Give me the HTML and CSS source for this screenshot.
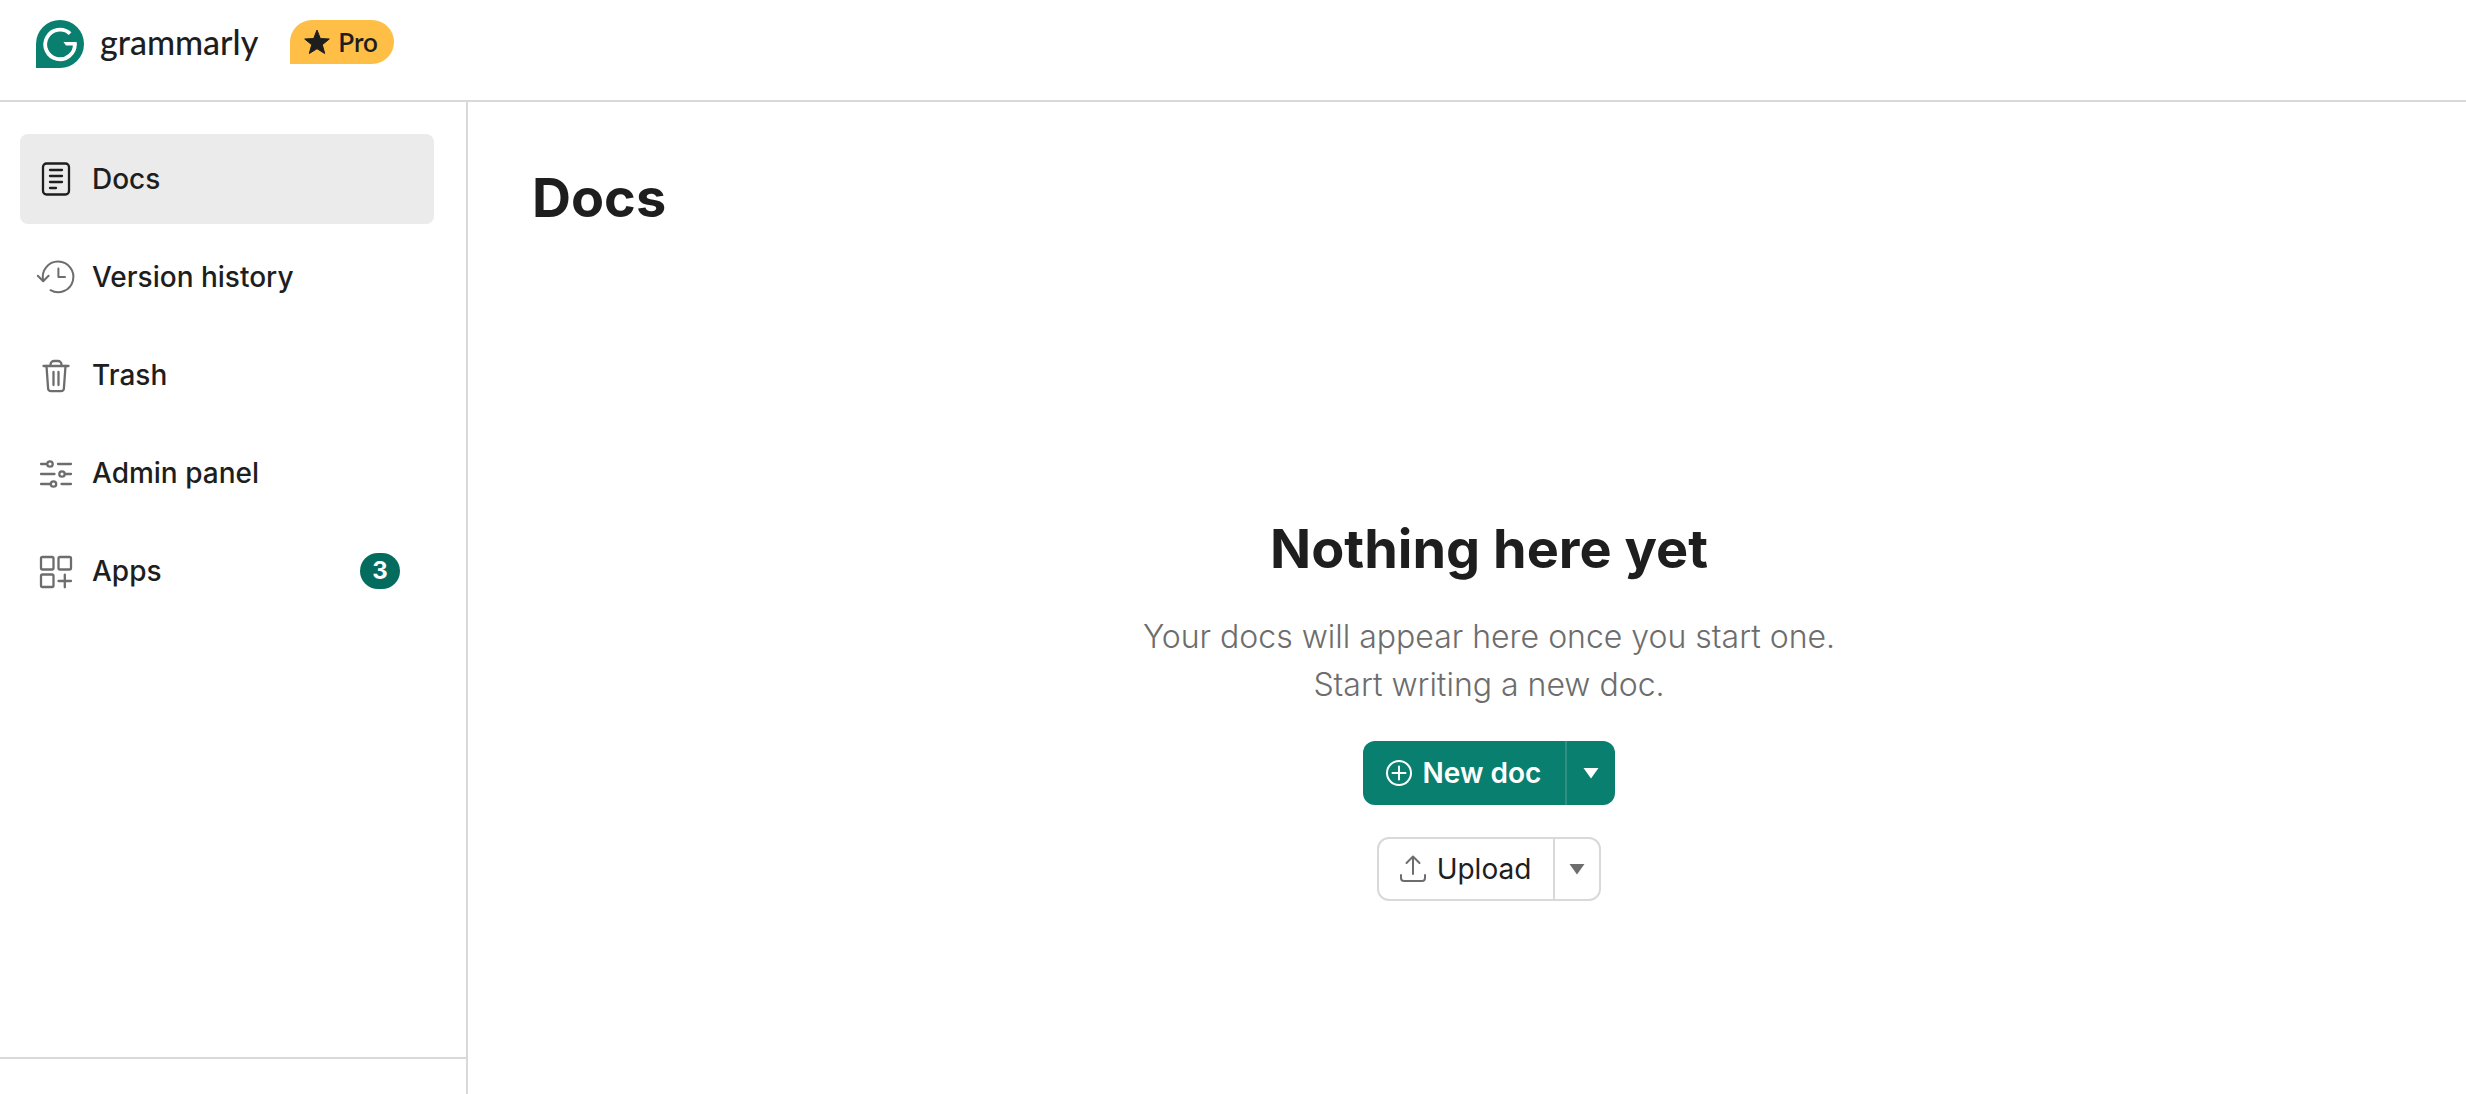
FILE: index.html
```html
<!DOCTYPE html>
<html lang="en">
<head>
    <meta charset="UTF-8">
    <meta name="viewport" content="width=device-width, initial-scale=1.0">
    <title>Docs - Grammarly</title>
    <link rel="stylesheet" href="styles.css">
</head>
<body>
    <header class="topbar">
        <a class="brand" href="#">
            <svg class="brand-mark" viewBox="0 0 48 48" aria-hidden="true">
                <path d="M24 0a24 24 0 0 1 0 48H0V24A24 24 0 0 1 24 0z" fill="#087f6f"/>
                <path d="M34.1 13.6A14.800 14.800 0 1 0 38.800 23.800" fill="none" stroke="#fff" stroke-width="3.8"/>
                <path d="M27.500 21.900h13.200v3.600H30z" fill="#fff"/>
            </svg>
            <span class="brand-name">grammarly</span>
        </a>
        <span class="plan">
            <svg class="plan-star" viewBox="0 0 26 26" aria-hidden="true">
                <path d="M13 1l3.300 8.500 9 .5-7 5.700 2.400 8.800-7.700-4.800-7.700 4.800 2.400-8.800-7-5.700 9-.5z" fill="#1e1e1e" stroke="#1e1e1e" stroke-linejoin="round"/>
            </svg>
            Pro
        </span>
    </header>
    <div class="layout">
        <aside class="sidebar">
            <nav class="menu">
                <a class="menu-item active" href="#">
                    <svg class="icon" viewBox="0 0 40 40" aria-hidden="true">
                        <rect x="7" y="4.5" width="26" height="31" rx="3.5"/>
                        <path d="M14 11h12M14 17h12M14 23h12M14 29h6"/>
                    </svg>
                    Docs
                </a>
                <a class="menu-item" href="#">
                    <svg class="icon thin" viewBox="0 0 40 40" aria-hidden="true">
                        <path d="M7.2 23.5A15.3 15.3 0 1 1 14.5 33.2"/>
                        <path d="M1.8 18.8l5.4 5.4 5.4-5.4M22.4 11.5V20H29"/>
                    </svg>
                    Version history
                </a>
                <a class="menu-item" href="#">
                    <svg class="icon" viewBox="0 0 40 40" aria-hidden="true">
                        <path d="M7.5 11h25M14.5 11V9.5A3.5 3.5 0 0 1 18 6h4a3.5 3.5 0 0 1 3.5 3.5V11"/>
                        <path d="M10.5 11l1.6 22.5a3 3 0 0 0 3 2.7h9.8a3 3 0 0 0 3-2.7L29.5 11M17.5 17v13M22.5 17v13"/>
                    </svg>
                    Trash
                </a>
                <a class="menu-item" href="#">
                    <svg class="icon" viewBox="0 0 40 40" aria-hidden="true">
                        <path d="M5 11h6M22 11h13M5 21h13.5M29 21h6M5 31h9.5M25.5 31H35"/>
                        <circle cx="14" cy="11" r="2.7"/>
                        <circle cx="26" cy="21" r="2.7"/>
                        <circle cx="17.5" cy="31" r="2.7"/>
                    </svg>
                    Admin panel
                </a>
                <a class="menu-item" href="#">
                    <svg class="icon" viewBox="0 0 40 40" aria-hidden="true">
                        <rect x="5" y="6" width="12.5" height="12.5" rx="1.5"/>
                        <rect x="22.5" y="6" width="12.5" height="12.5" rx="1.5"/>
                        <rect x="5" y="23.5" width="12.5" height="12.5" rx="1.5"/>
                        <path d="M22.5 30H35M28.8 23.7v12.6"/>
                    </svg>
                    Apps
                    <span class="count">3</span>
                </a>
            </nav>
            <div class="sidebar-footer"></div>
        </aside>
        <main class="content">
            <h1>Docs</h1>
            <section class="empty">
                <h2>Nothing here yet</h2>
                <p>Your docs will appear here once you start one.<br>Start writing a new doc.</p>
                <div class="split primary">
                    <button type="button" class="split-main">
                        <svg class="btn-icon" viewBox="0 0 28 28" aria-hidden="true">
                            <circle cx="14" cy="14" r="12"/>
                            <path d="M14 7.5v13M7.5 14h13"/>
                        </svg>
                        New doc
                    </button>
                    <button type="button" class="split-toggle" aria-label="More new doc options">
                        <svg class="caret" viewBox="0 0 16 12" aria-hidden="true"><path d="M.5 1h15L8 11.500z"/></svg>
                    </button>
                </div>
                <div class="split secondary">
                    <button type="button" class="split-main">
                        <svg class="btn-icon" viewBox="0 0 28 28" aria-hidden="true">
                            <path d="M2 20v3a3 3 0 0 0 3 3h18a3 3 0 0 0 3-3v-3M14 19V1.5M7.5 8L14 1.500 20.5 8"/>
                        </svg>
                        Upload
                    </button>
                    <button type="button" class="split-toggle" aria-label="More upload options">
                        <svg class="caret" viewBox="0 0 16 12" aria-hidden="true"><path d="M.5 1h15L8 11.500z"/></svg>
                    </button>
                </div>
            </section>
        </main>
    </div>
</body>
</html>
```

FILE: styles.css
```css
* { box-sizing: border-box; }
body {
    display: flex;
    flex-direction: column;
    min-height: 100vh;
    margin: 0;
    font-family: Inter, "Liberation Sans", sans-serif;
    font-size: 28px;
    line-height: 40px;
    color: #1e1e1e;
    background-color: #fff;
}
a {
    color: inherit;
    text-decoration: none;
}
svg {
    display: block;
    flex: none;
}

/* Top bar */
.topbar {
    display: flex;
    align-items: flex-start;
    gap: 32px;
    height: 102px;
    padding: 20px 36px;
    border-bottom: 2px solid #d9d9d9;
}
.brand {
    display: flex;
    align-items: flex-start;
    gap: 16px;
}
.brand-mark {
    width: 48px;
    height: 48px;
}
.brand-name {
    font-family: Lato, sans-serif;
    font-size: 34px;
    font-weight: 500;
    line-height: 44px;
}
.plan {
    display: flex;
    align-items: center;
    gap: 8px;
    height: 44px;
    padding: 0 16px 0 14px;
    border-radius: 22px 22px 22px 0;
    background-color: #ffbf47;
    font-family: Lato, sans-serif;
    font-size: 26px;
    font-weight: 600;
}
.plan-star {
    width: 26px;
    height: 26px;
}

/* Sidebar */
.layout {
    display: flex;
    flex: 1;
}
.sidebar {
    display: flex;
    flex-direction: column;
    width: 468px;
    border-right: 2px solid #d9d9d9;
}
.menu {
    display: flex;
    flex: 1;
    flex-direction: column;
    gap: 8px;
    padding: 32px 32px 32px 20px;
}
.menu-item {
    display: flex;
    align-items: center;
    gap: 16px;
    height: 90px;
    padding: 0 34px 0 16px;
    border-radius: 8px;
    font-weight: 500;
}
.menu-item.active {
    background-color: #ebebeb;
}
.icon {
    width: 40px;
    height: 40px;
    fill: none;
    stroke: #6d6d6d;
    stroke-width: 2.3;
    stroke-linecap: round;
    stroke-linejoin: round;
}
.active .icon {
    stroke: #1e1e1e;
}
.icon.thin {
    stroke-width: 2;
}
.count {
    width: 40px;
    height: 36px;
    margin-left: auto;
    border-radius: 18px;
    background-color: #046c5e;
    color: #fff;
    font-size: 24px;
    font-weight: 700;
    line-height: 36px;
    text-align: center;
}
.sidebar-footer {
    height: 37px;
    border-top: 2px solid #d9d9d9;
}

/* Main area */
.content {
    flex: 1;
    padding: 64px 20px 64px 64px;
}
h1, h2 {
    margin: 0;
    font-size: 54px;
    font-weight: 700;
    line-height: 64px;
}
.empty {
    display: flex;
    flex-direction: column;
    align-items: center;
    gap: 32px;
    padding-top: 287px;
}
.empty p {
    margin: 0;
    color: #6d6d6d;
    font-size: 32px;
    font-weight: 300;
    line-height: 48px;
    text-align: center;
}

/* Split buttons */
.split {
    display: flex;
    height: 64px;
    border-radius: 12px;
    overflow: hidden;
}
.split button {
    display: flex;
    align-items: center;
    border: none;
    background: none;
    color: inherit;
    font: inherit;
    cursor: pointer;
}
.split .split-main {
    gap: 10px;
    padding: 0 24px 0 22px;
}
.split .split-toggle {
    justify-content: center;
    width: 50px;
    padding: 0;
    border-left: 2px solid #d9d9d9;
}
.btn-icon {
    width: 28px;
    height: 28px;
    fill: none;
    stroke: currentColor;
    stroke-width: 2;
    stroke-linecap: round;
    stroke-linejoin: round;
}
.caret {
    width: 16px;
    height: 12px;
    fill: currentColor;
}
.primary {
    background-color: #087f6f;
    color: #fff;
    font-weight: 600;
}
.primary .split-toggle {
    border-left-color: #308f82;
}
.secondary {
    border: 2px solid #d9d9d9;
}
.secondary .split-main {
    padding: 0 22px 0 20px;
}
.secondary .split-toggle {
    width: 46px;
}
.secondary .btn-icon,
.secondary .caret {
    color: #6d6d6d;
}
```
